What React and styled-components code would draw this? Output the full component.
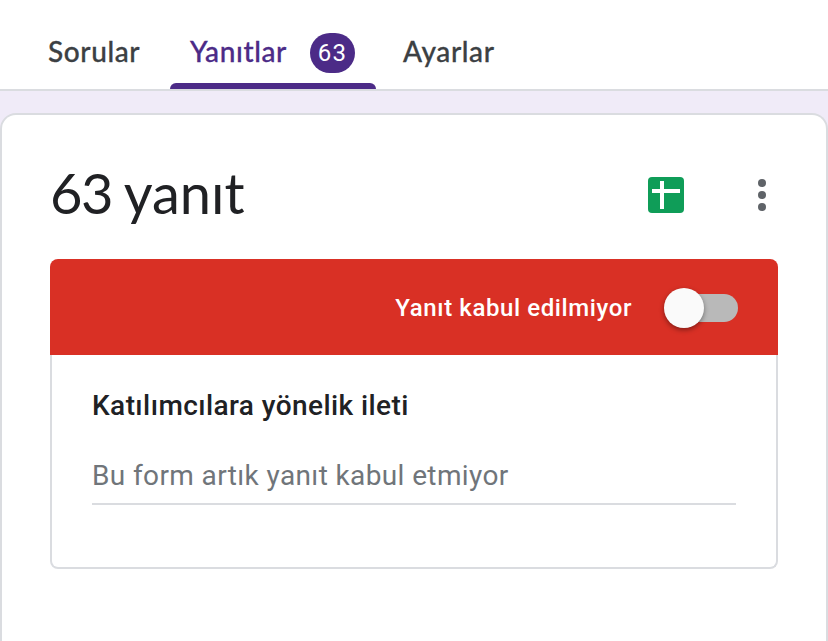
import React from 'react';
import styled, { createGlobalStyle, css } from 'styled-components';

const colors = {
  purple: '#4c2b87',
  lavender: '#f0ebf8',
  border: '#dadce0',
  text: '#202124',
  tab: '#3c4043',
  muted: '#70757a',
  icon: '#5f6368',
  red: '#d93025',
  green: '#0f9d58'
};

const GlobalStyle = createGlobalStyle`
  * {
    box-sizing: border-box;
  }

  body {
    margin: 0;
    background: ${colors.lavender};
    font-family: Roboto, sans-serif;
    color: ${colors.text};
  }
`;

const Page = styled.div`
  height: 100vh;
  overflow: hidden;
  display: flex;
  flex-direction: column;
`;

const TabBar = styled.nav`
  display: flex;
  height: 91px;
  flex: none;
  padding-left: 28px;
  background: white;
  border-bottom: 2px solid ${colors.border};
`;

const Tab = styled.div`
  display: flex;
  flex-direction: column;
  width: ${props => props.$width}px;
  color: ${colors.tab};

  ${props => props.$active && css`
    margin-right: 7px;
    color: ${colors.purple};
  `}
`;

const TabContent = styled.div`
  height: 83px;
  display: flex;
  align-items: center;
  padding: 22px 0 0 20px;
`;

const TabLabel = styled.span`
  padding-bottom: 4px;
  font-family: Lato, sans-serif;
  font-size: 28px;
  font-weight: 500;
  line-height: 36px;
  letter-spacing: 0.6px;
  -webkit-text-stroke: 0.3px currentColor;
  white-space: nowrap;
`;

const Badge = styled.span`
  width: 45px;
  height: 40px;
  margin-left: auto;
  margin-right: 21px;
  display: flex;
  align-items: center;
  justify-content: center;

  background: ${colors.purple};
  border-radius: 20px;
  color: white;
  font-size: 24px;
  letter-spacing: 1.2px;
`;

const Indicator = styled.div`
  height: 6px;
  background: ${colors.purple};
  border-radius: 6px 6px 0 0;
`;

const Card = styled.main`
  flex: 1;
  margin-top: 22px;
  padding: 0 48px;
  background: white;
  border: 2px solid ${colors.border};
  border-bottom: none;
  border-radius: 16px 16px 0 0;
`;

const CardHeader = styled.header`
  display: flex;
  align-items: center;
  height: 144px;
  padding-top: 16px;
`;

const Title = styled.h1`
  margin: 0 auto 0 0;
  padding-bottom: 4px;
  font-family: Lato, sans-serif;
  font-size: 56px;
  font-weight: 400;
  line-height: 72px;
`;

const Count = styled.span`
  margin-right: -1px;
  letter-spacing: -1.6px;
`;

const SheetsIcon = styled.svg`
  width: 36px;
  height: 36px;
  margin-right: 73px;
`;

const MoreIcon = styled.svg`
  width: 10px;
  height: 34px;
  margin-right: 11px;
  fill: ${colors.icon};
`;

const Banner = styled.div`
  display: flex;
  align-items: center;
  justify-content: flex-end;
  height: 96px;
  padding: 2px 40px 0 0;
  background: ${colors.red};
  border-radius: 8px 8px 0 0;
`;

const BannerLabel = styled.span`
  margin-right: 32px;
  color: white;
  font-size: 24px;
  font-weight: 500;
  letter-spacing: 0.6px;
`;

const Switch = styled.div`
  display: flex;
  align-items: center;
  width: 74px;
  height: 40px;
`;

const Thumb = styled.div`
  z-index: 1;
  flex: none;
  width: 40px;
  height: 40px;
  background: #fafafa;
  border-radius: 50%;
  box-shadow: 0 2px 5px rgba(0,0,0,0.4);
`;

const Track = styled.div`
  flex: 1;
  height: 28px;
  margin-left: -20px;
  background: #b9b9b9;
  border-radius: 0 14px 14px 0;
`;

const Message = styled.section`
  height: 214px;
  padding: 33px 40px 0;
  border: 2px solid ${colors.border};
  border-top: none;
  border-radius: 0 0 8px 8px;
`;

const MessageTitle = styled.h2`
  margin: 0;
  font-size: 28px;
  font-weight: 500;
  line-height: 36px;
  letter-spacing: 0.42px;
`;

const MessageText = styled.div`
  height: 52px;
  margin-top: 29px;
  border-bottom: 2px solid ${colors.border};
  color: ${colors.muted};
  font-size: 28px;
  line-height: 46px;
  letter-spacing: 0.38px;
`;

const App = () => (
  <Page>
    <GlobalStyle/>
    <TabBar>
      <Tab $width={142}>
        <TabContent><TabLabel>Sorular</TabLabel></TabContent>
      </Tab>
      <Tab $width={206} $active>
        <TabContent>
          <TabLabel>Yanıtlar</TabLabel>
          <Badge>63</Badge>
        </TabContent>
        <Indicator/>
      </Tab>
      <Tab $width={142}>
        <TabContent><TabLabel>Ayarlar</TabLabel></TabContent>
      </Tab>
    </TabBar>
    <Card>
      <CardHeader>
        <Title><Count>63</Count> yanıt</Title>
        <SheetsIcon viewBox="0 0 36 36">
          <rect width="36" height="36" rx="4" fill={colors.green}/>
          <path d="M12 4h4v8h16v4H16v16h-4V16H4v-4h8z" fill="white"/>
        </SheetsIcon>
        <MoreIcon viewBox="0 0 10 34">
          <circle cx="5" cy="5" r="4"/>
          <circle cx="5" cy="17" r="4"/>
          <circle cx="5" cy="29" r="4"/>
        </MoreIcon>
      </CardHeader>
      <Banner>
        <BannerLabel>Yanıt kabul edilmiyor</BannerLabel>
        <Switch>
          <Thumb/>
          <Track/>
        </Switch>
      </Banner>
      <Message>
        <MessageTitle>Katılımcılara yönelik ileti</MessageTitle>
        <MessageText>Bu form artık yanıt kabul etmiyor</MessageText>
      </Message>
    </Card>
  </Page>
);

export default App;
